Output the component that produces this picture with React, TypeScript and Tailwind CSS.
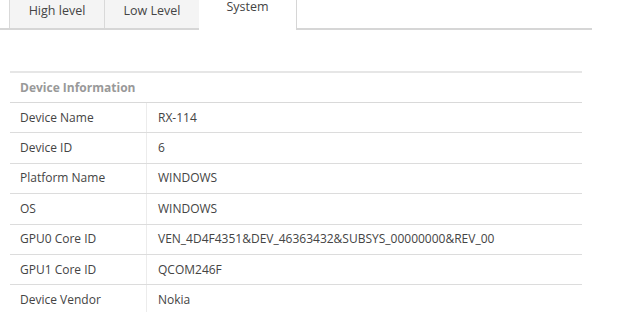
import React from 'react';

const rows: [string, string][] = [
    ['Device Name', 'RX-114'],
    ['Device ID', '6'],
    ['Platform Name', 'WINDOWS'],
    ['OS', 'WINDOWS'],
    ['GPU0 Core ID', 'VEN_4D4F4351&DEV_46363432&SUBSYS_00000000&REV_00'],
    ['GPU1 Core ID', 'QCOM246F'],
    ['Device Vendor', 'Nokia'],
];

const tabs = ['High level', 'Low Level', 'System'];

export default function App() {
    const active = 'System';

    return (
        <div className="w-[620px] h-[312px] overflow-hidden bg-white text-[12px] text-[#444]" style={{ fontFamily: '"Open Sans", "Noto Sans", sans-serif' }}>
            {/* Tabs */}
            <div className="flex w-[592px] h-[30px] border-b-2 border-[#d6d6d6] pl-[9px]">
                {tabs.map(tab => (
                    tab === active ? (
                        <div key={tab} className="w-[98px] h-[30px] -mb-[2px] bg-white border-r border-[#d6d6d6] flex justify-center pt-[1px] leading-[12px] text-[12.5px]">
                            {tab}
                        </div>
                    ) : (
                        <div key={tab} className="w-[95px] h-full bg-[#f4f4f4] border-l border-[#d9d9d9] flex items-center justify-center pb-[6px] text-[12.5px]">
                            {tab}
                        </div>
                    )
                ))}
            </div>

            {/* Device information table */}
            <div className="ml-[10px] mt-[41px] w-[572px] border-t-2 border-[#e6e6e6]">
                <div className="h-[30px] flex items-center px-[10px] border-b border-[#d9d9d9] font-bold text-[#999]">
                    Device Information
                </div>
                {rows.map(([label, value]) => (
                    <div key={label} className="flex h-[30.4px] border-b border-[#dcdcdc]">
                        <div className="w-[137px] pl-[10px] flex items-center border-r border-[#ececec]">{label}</div>
                        <div className="flex-1 pl-[11px] flex items-center">{value}</div>
                    </div>
                ))}
            </div>
        </div>
    );
}
